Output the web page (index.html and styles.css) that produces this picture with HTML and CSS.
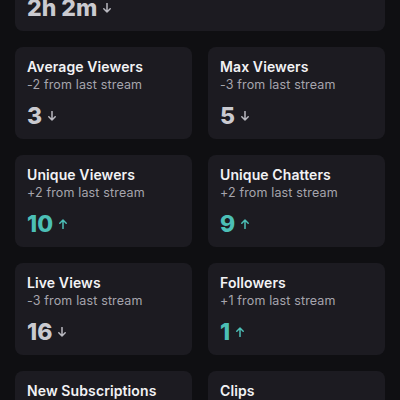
FILE: index.html
```html
<!DOCTYPE html>
<html lang="en">
<head>
    <meta charset="UTF-8">
    <meta name="viewport" content="width=device-width, initial-scale=1.0">
    <title>Stream Stats</title>
    <link rel="stylesheet" href="styles.css">
</head>
<body>
    <div class="stats">
        <!-- Duração da live -->
        <div class="card card-wide">
            <div class="card-title">Stream Length</div>
            <div class="card-sub">-31m from last stream</div>
            <div class="card-value down">2h 2m <svg class="arrow" viewBox="0 0 8 10"><path d="M4 0.5V9M0.8 5.8L4 9L7.2 5.8"/></svg></div>
        </div>

        <div class="card">
            <div class="card-title">Average Viewers</div>
            <div class="card-sub">-2 from last stream</div>
            <div class="card-value down">3 <svg class="arrow" viewBox="0 0 8 10"><path d="M4 0.5V9M0.8 5.8L4 9L7.2 5.8"/></svg></div>
        </div>
        <div class="card">
            <div class="card-title">Max Viewers</div>
            <div class="card-sub">-3 from last stream</div>
            <div class="card-value down">5 <svg class="arrow" viewBox="0 0 8 10"><path d="M4 0.5V9M0.8 5.8L4 9L7.2 5.8"/></svg></div>
        </div>

        <div class="card">
            <div class="card-title">Unique Viewers</div>
            <div class="card-sub">+2 from last stream</div>
            <div class="card-value up">10 <svg class="arrow" viewBox="0 0 8 10"><path d="M4 9.5V1M0.8 4.2L4 1L7.2 4.2"/></svg></div>
        </div>
        <div class="card">
            <div class="card-title">Unique Chatters</div>
            <div class="card-sub">+2 from last stream</div>
            <div class="card-value up">9 <svg class="arrow" viewBox="0 0 8 10"><path d="M4 9.5V1M0.8 4.2L4 1L7.2 4.2"/></svg></div>
        </div>

        <div class="card">
            <div class="card-title">Live Views</div>
            <div class="card-sub">-3 from last stream</div>
            <div class="card-value down">16 <svg class="arrow" viewBox="0 0 8 10"><path d="M4 0.5V9M0.8 5.8L4 9L7.2 5.8"/></svg></div>
        </div>
        <div class="card">
            <div class="card-title">Followers</div>
            <div class="card-sub">+1 from last stream</div>
            <div class="card-value up">1 <svg class="arrow" viewBox="0 0 8 10"><path d="M4 9.5V1M0.8 4.2L4 1L7.2 4.2"/></svg></div>
        </div>

        <div class="card">
            <div class="card-title">New Subscriptions</div>
            <div class="card-sub">0 from last stream</div>
            <div class="card-value">0</div>
        </div>
        <div class="card">
            <div class="card-title">Clips</div>
            <div class="card-sub">0 from last stream</div>
            <div class="card-value">0</div>
        </div>
    </div>
</body>
</html>
```

FILE: styles.css
```css
* {
    margin: 0;
    padding: 0;
    box-sizing: border-box;
}
body {
    font-family: Inter, "Noto Sans", sans-serif;
    background-color: #0f0f12;
    color: #f2f2f4;
    overflow: hidden;
}
.stats {
    display: grid;
    grid-template-columns: 1fr 1fr;
    gap: 16px;
    padding: 0 15px;
    margin-top: -61px; /* página rolada */
}
.card {
    background-color: #1c1b21;
    border-radius: 8px;
    padding: 11px 12px 9px;
    height: 92px;
}
.card-wide {
    grid-column: span 2;
}
.card-title {
    font-size: 14px;
    line-height: 18px;
    font-weight: 600;
    letter-spacing: 0.1px;
    color: #f2f2f4;
}
.card-sub {
    font-size: 12.5px;
    line-height: 17px;
    letter-spacing: 0.15px;
    color: #a6a5ad;
}
.card-value {
    display: flex;
    align-items: center;
    gap: 6px;
    margin-top: 9px;
    font-size: 23px;
    line-height: 28px;
    font-weight: 800;
    color: #cacad0;
}
.card-value.up {
    color: #4cbfb6;
}
.arrow {
    width: 8px;
    height: 10px;
    fill: none;
    stroke: currentColor;
    stroke-width: 1.5;
    stroke-linecap: round;
    stroke-linejoin: round;
}
.down .arrow {
    color: #b9b9c0;
}
```
